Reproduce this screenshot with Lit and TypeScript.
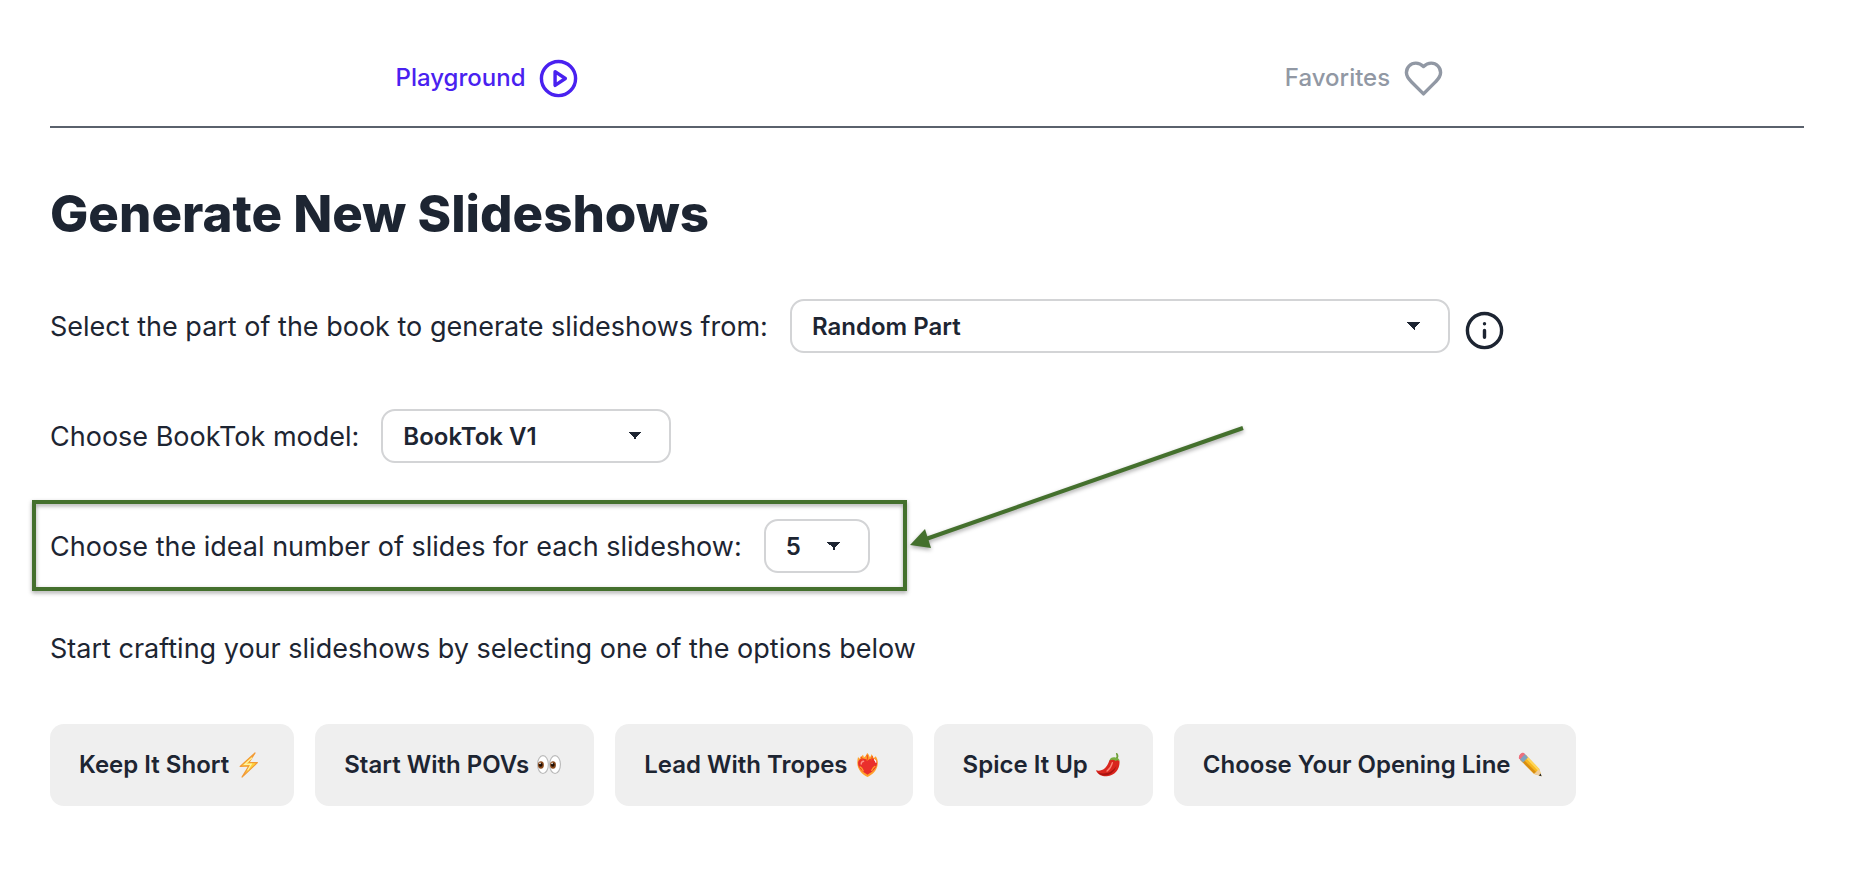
import { LitElement, html, css, svg } from "lit";
import { customElement, state } from "lit/decorators.js";

const bolt = svg`
  <path d="M20 1 4 15.500l9.500-.5L6 27 22.500 11.500l-9-.2Z" fill="#fdd23c" stroke="#f29a35" stroke-width="1.300" stroke-linejoin="round"/>
  <path d="M17 6 9 13.300l7-.2-4 6.500" fill="none" stroke="#fff3a8" stroke-width="1.200"/>`;

const eyes = svg`
  <ellipse cx="7" cy="13.500" rx="5.800" ry="9.600" fill="#fff" stroke="#b9b9b9" stroke-width="1.200"/>
  <ellipse cx="20" cy="13.500" rx="5.800" ry="9.600" fill="#fff" stroke="#b9b9b9" stroke-width="1.200"/>
  <ellipse cx="4.800" cy="14" rx="3.200" ry="4" fill="#8a4a1c"/>
  <ellipse cx="17.800" cy="14" rx="3.200" ry="4" fill="#8a4a1c"/>
  <circle cx="4.600" cy="13.800" r="2" fill="#1c0d05"/>
  <circle cx="17.600" cy="13.800" r="2" fill="#1c0d05"/>
  <circle cx="3.800" cy="12.200" r=".9" fill="#fff"/>
  <circle cx="16.800" cy="12.200" r=".9" fill="#fff"/>`;

const fireHeart = svg`
  <path d="M13 27C7 24.500 1.500 18 2 11c0-2 .3-4 .8-6 .8 1.500 1.500 2 2.200 2C5.500 5 7 4.500 8 3c.8 1 1 2 1 3 1.500-1 3-2.500 3.500-5 2 1.500 2.500 3 3 5 .8-1 1.500-2 1.500-3.500C18.500 3.500 19 5 19.500 6.500c1-.5 1.800-1 2.300-2C23.500 7 24.500 10 24 13c-.6 6.500-5.500 11.500-11 14Z" fill="#ffa02c"/>
  <path d="M13 24.500C8 21.500 2.800 17.500 2.800 12.200c0-6 7.200-6.700 10.200-2.700 3-4 10.200-3.300 10.200 2.700 0 5.300-5.200 9.300-10.200 12.300Z" fill="#ea2f2c"/>
  <path d="M6 5.500c1 1 1.500 2 1.200 3M12.500 3.500c1 2 .7 3.500-.3 5.500M18 5c.2 1.500-.2 2.500-1 3.500" fill="none" stroke="#f4501f" stroke-width="1.400" stroke-linecap="round"/>
  <path d="M5 16c1.800.8 2.500 2.300 3.300 4.300M21 15.500c-1.800.8-2.500 2.300-3.500 4.300" fill="none" stroke="#ffa02c" stroke-width="1.400" stroke-linecap="round"/>
  <path d="M6.200 13c0-2 1-3 2.600-3.100" fill="none" stroke="#ff8f88" stroke-width="1.500" stroke-linecap="round"/>
  <path d="M20.500 8.300c1 .8 1.400 1.600 1.500 2.700" fill="none" stroke="#fff" stroke-width="1.300" stroke-linecap="round"/>`;

const pepper = svg`
  <path d="M22.500 7.500C24 5.500 24.300 4 23 2" fill="none" stroke="#6f9f3a" stroke-width="1.900" stroke-linecap="round"/>
  <path d="M15 9c2-2.500 9-2.500 10.800.8 1 7.200-4.300 15.700-13.500 16.400C7.500 26.500 2.500 24.800.5 19.700c6.500 1.700 11.800-2.200 14.500-10.700Z" fill="#d9251d"/>
  <path d="M2.500 22c7 2.500 15.500.500 20-7-2 7-8 10.200-12.500 10.200-3 0-6-1-7.500-3.200Z" fill="#a8120f"/>
  <path d="M18.200 11.500c-1 4-3 7-5.700 9" fill="none" stroke="#ff8377" stroke-width="1.500" stroke-linecap="round"/>
  <path d="M15 9.500c.5-3.200 3.500-4.300 6.300-3.700 2.700.1 4.700 1.600 4.700 4.200-1.500-1.300-3.200-1.300-4.200-.3-1.900-1.500-4.500-1.700-6.800-.2Z" fill="#79b040"/>`;

const pencil = svg`
  <path d="M7.800 3 22.500 18.200 24.800 26 17 23.800 2 8.500Z" fill="#f7b71d"/>
  <path d="M2 8.500 3.900 6.700 19.500 22l-2.500 1.800Z" fill="#d98e12"/>
  <path d="m7.800 3-1.700 1.700L21 20.200l1.500-2Z" fill="#ffd65a"/>
  <path d="m22.500 18.200 2.300 7.800-7.800-2.200c.3-1.300.8-1.800 2.200-2 .2-1.500.8-2 1.500-2Z" fill="#f0cfa0"/>
  <path d="m24 23.200.8 2.800-2.900-.8Z" fill="#2a2a2a"/>
  <path d="M5.700 1.200 9.300 4.800 4 10.300.5 6.800C0 4 3 .5 5.700 1.200Z" fill="#ee6f7d"/>
  <path d="m6.800 2.200 3.500 3.600L5 11.300 1.500 7.700Z" fill="#7fa3bf"/>
  <path d="M5.300.9C3 .5 0 3.500.6 6.700l1 1L6.900 2.200Z" fill="#ee6f7d"/>`;

const options = [
  { label: "Keep It Short", alt: "lightning bolt", art: bolt },
  { label: "Start With POVs", alt: "eyes", art: eyes },
  { label: "Lead With Tropes", alt: "heart on fire", art: fireHeart },
  { label: "Spice It Up", alt: "hot pepper", art: pepper },
  { label: "Choose Your Opening Line", alt: "pencil", art: pencil },
];

@customElement("app-root")
export class AppRoot extends LitElement {
  @state() private tab = "playground";

  static styles = css`
    :host {
      display: block;
      min-height: 100vh;
      box-sizing: border-box;
      padding: 30px 66px 80px 50px;
      background: #fff;
      color: #1d2532;
      font-family: Inter, "Liberation Sans", sans-serif;
      font-size: 27px;
      line-height: 40px;
    }
    .tabs {
      display: grid;
      grid-template-columns: 1fr 1fr;
      border-bottom: 2px solid #5a616c;
    }
    .tab {
      display: flex;
      align-items: center;
      justify-content: center;
      gap: 13px;
      height: 96px;
      padding: 0 2px 0 0;
      border: 0;
      background: none;
      color: #9198a4;
      font: 500 24px/32px Inter, "Liberation Sans", sans-serif;
      cursor: pointer;
    }
    .tab.active {
      color: #4921f0;
    }
    .icon {
      flex: none;
      width: 41px;
      height: 41px;
      fill: none;
      stroke: currentColor;
      stroke-width: 2;
      stroke-linecap: round;
      stroke-linejoin: round;
    }
    h1 {
      margin: 54px 0 0;
      font-size: 51px;
      line-height: 64px;
      font-weight: 800;
    }
    .form {
      display: flex;
      flex-direction: column;
      align-items: flex-start;
      gap: 56px;
      margin-top: 53px;
    }
    .row {
      display: flex;
      align-items: center;
      gap: 14px;
      max-width: 100%;
    }
    label {
      margin-right: 8px;
      padding-top: 2px;
    }
    select {
      appearance: none;
      height: 54px;
      margin: 0;
      padding: 2px 50px 0 20px;
      border: 2px solid #d3d4d6;
      border-radius: 14px;
      background-color: #fff;
      background-image: linear-gradient(45deg, transparent 50%, currentColor 50%),
        linear-gradient(135deg, currentColor 50%, transparent 50%);
      background-size: 8px 8px;
      background-repeat: no-repeat;
      background-position: right 33px center, right 27px center;
      color: inherit;
      font: 600 24px/32px Inter, "Liberation Sans", sans-serif;
    }
    .part {
      width: 660px;
    }
    .model {
      width: 290px;
    }
    .count {
      width: 106px;
    }
    .info {
      display: flex;
      padding: 8px 0 0;
      border: 0;
      background: none;
      color: inherit;
    }
    .marked {
      position: relative;
    }
    .frame {
      position: absolute;
      inset: -19px -37px -18px -18px;
      border: 4px solid #44702d;
      filter: drop-shadow(0 2px 2px rgba(0, 0, 0, 0.35));
      pointer-events: none;
    }
    .pointer {
      position: absolute;
      left: 100%;
      bottom: -1px;
      width: 340px;
      height: 150px;
      margin-left: 38px;
      overflow: visible;
      filter: drop-shadow(0 2px 2px rgba(0, 0, 0, 0.35));
      pointer-events: none;
    }
    .hint {
      margin: 0;
    }
    .options {
      display: flex;
      flex-wrap: wrap;
      gap: 21px;
      margin-top: 55px;
    }
    .option {
      display: flex;
      align-items: center;
      gap: 7px;
      height: 82px;
      padding: 0 32px 0 29px;
      border: 0;
      border-radius: 14px;
      background: #efefef;
      color: inherit;
      font: 600 24px/32px Inter, "Liberation Sans", sans-serif;
      cursor: pointer;
    }
    .emoji {
      flex: none;
      width: 26px;
      height: 26px;
    }
  `;

  render() {
    return html`
      <nav class="tabs">
        <button class="tab ${this.tab === "playground" ? "active" : ""}" @click=${() => (this.tab = "playground")}>
          Playground
          <svg class="icon" viewBox="0 0 24 24" aria-hidden="true">
            <circle cx="12" cy="12" r="10" />
            <path d="m10 8 6 4-6 4Z" />
          </svg>
        </button>
        <button class="tab ${this.tab === "favorites" ? "active" : ""}" @click=${() => (this.tab = "favorites")}>
          Favorites
          <svg class="icon" viewBox="0 0 24 24" aria-hidden="true">
            <path d="M19 14c1.490-1.460 3-3.210 3-5.500A5.500 5.500 0 0 0 16.500 3c-1.760 0-3 .5-4.500 2-1.500-1.500-2.740-2-4.500-2A5.500 5.500 0 0 0 2 8.500c0 2.300 1.500 4.050 3 5.500l7 7Z" />
          </svg>
        </button>
      </nav>

      <h1>Generate New Slideshows</h1>

      <div class="form">
        <div class="row">
          <label for="part">Select the part of the book to generate slideshows from:</label>
          <select id="part" class="part"><option>Random Part</option></select>
          <button class="info" aria-label="About book parts">
            <svg class="icon" viewBox="0 0 24 24" aria-hidden="true">
              <circle cx="12" cy="12" r="10" />
              <path d="M12 16v-4M12 8h.01" />
            </svg>
          </button>
        </div>
        <div class="row">
          <label for="model">Choose BookTok model:</label>
          <select id="model" class="model"><option>BookTok V1</option></select>
        </div>
        <div class="row marked">
          <label for="count">Choose the ideal number of slides for each slideshow:</label>
          <select id="count" class="count"><option>5</option></select>
          <div class="frame"></div>
          <svg class="pointer" viewBox="0 0 340 150" aria-hidden="true">
            <path d="M335 4 18 115" stroke="#44702d" stroke-width="4" />
            <path d="M2 121 17 105 23 124Z" fill="#44702d" />
          </svg>
        </div>
        <p class="hint">Start crafting your slideshows by selecting one of the options below</p>
      </div>

      <div class="options">
        ${options.map(
          (o) => html`
            <button class="option">
              ${o.label}
              <svg class="emoji" viewBox="0 0 27 28" role="img" aria-label=${o.alt}>${o.art}</svg>
            </button>
          `
        )}
      </div>
    `;
  }
}
